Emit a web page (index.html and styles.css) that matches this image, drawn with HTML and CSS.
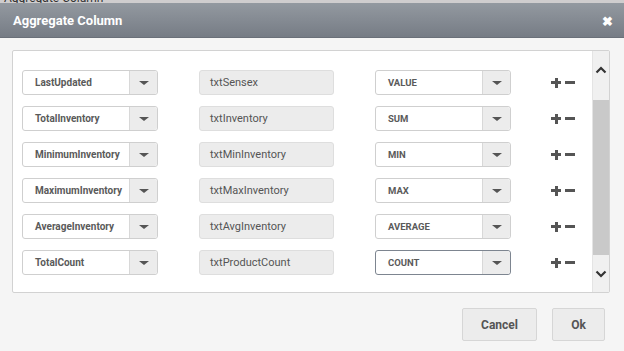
FILE: index.html
```html
<!DOCTYPE html>
<html lang="en">
<head>
    <meta charset="UTF-8">
    <title>Aggregate Column</title>
    <link rel="stylesheet" href="styles.css">
</head>
<body>
    <div class="top-strip"><span>Aggregate Column</span></div>
    <div class="dialog">
        <div class="header">
            <span class="title">Aggregate Column</span>
            <span class="close">&#10006;</span>
        </div>
        <div class="content">
            <div class="panel">
                <div class="rows">
                    <div class="row">
                        <div class="select field"><span class="label">LastUpdated</span><span class="caret"></span></div>
                        <div class="text-input">txtSensex</div>
                        <div class="select agg"><span class="label">VALUE</span><span class="caret"></span></div>
                        <div class="actions"><span class="plus"></span><span class="minus"></span></div>
                    </div>
                    <div class="row">
                        <div class="select field"><span class="label">TotalInventory</span><span class="caret"></span></div>
                        <div class="text-input">txtInventory</div>
                        <div class="select agg"><span class="label">SUM</span><span class="caret"></span></div>
                        <div class="actions"><span class="plus"></span><span class="minus"></span></div>
                    </div>
                    <div class="row">
                        <div class="select field"><span class="label">MinimumInventory</span><span class="caret"></span></div>
                        <div class="text-input">txtMinInventory</div>
                        <div class="select agg"><span class="label">MIN</span><span class="caret"></span></div>
                        <div class="actions"><span class="plus"></span><span class="minus"></span></div>
                    </div>
                    <div class="row">
                        <div class="select field"><span class="label">MaximumInventory</span><span class="caret"></span></div>
                        <div class="text-input">txtMaxInventory</div>
                        <div class="select agg"><span class="label">MAX</span><span class="caret"></span></div>
                        <div class="actions"><span class="plus"></span><span class="minus"></span></div>
                    </div>
                    <div class="row">
                        <div class="select field"><span class="label">AverageInventory</span><span class="caret"></span></div>
                        <div class="text-input">txtAvgInventory</div>
                        <div class="select agg"><span class="label">AVERAGE</span><span class="caret"></span></div>
                        <div class="actions"><span class="plus"></span><span class="minus"></span></div>
                    </div>
                    <div class="row">
                        <div class="select field"><span class="label">TotalCount</span><span class="caret"></span></div>
                        <div class="text-input">txtProductCount</div>
                        <div class="select agg focused"><span class="label">COUNT</span><span class="caret"></span></div>
                        <div class="actions"><span class="plus"></span><span class="minus"></span></div>
                    </div>
                </div>
                <div class="scrollbar">
                    <div class="arrow">
                        <svg width="12" height="8" viewBox="0 0 12 8"><path d="M1.5 6.5 L6 2 L10.5 6.5" fill="none" stroke="#333" stroke-width="2.2"/></svg>
                    </div>
                    <div class="track"><div class="thumb"></div></div>
                    <div class="arrow">
                        <svg width="12" height="8" viewBox="0 0 12 8"><path d="M1.5 1.5 L6 6 L10.5 1.5" fill="none" stroke="#333" stroke-width="2.2"/></svg>
                    </div>
                </div>
            </div>
            <div class="footer">
                <button class="btn cancel">Cancel</button>
                <button class="btn ok">Ok</button>
            </div>
        </div>
    </div>
</body>
</html>
```

FILE: styles.css
```css
body {
    margin: 0;
    font-family: Roboto, "Liberation Sans", Arial, sans-serif;
    background-color: #f5f5f5;
    color: #555;
}
.top-strip {
    height: 3px;
    overflow: hidden;
    background-color: #cfcdce;
    font-size: 12px;
    line-height: 12px;
    color: #333;
    padding-left: 4px;
}
.top-strip span {
    display: block;
    margin-top: -8px;
}
.header {
    height: 34px;
    display: flex;
    align-items: center;
    justify-content: space-between;
    padding: 0 13px;
    background: linear-gradient(#9399a0, #767c85);
    border-bottom: 1px solid #6a7079;
}
.title {
    color: #fff;
    font-size: 13px;
    font-weight: bold;
    margin-top: 1px;
}
.close {
    color: #fff;
    font-size: 13px;
    font-weight: bold;
    margin-right: -2px;
    margin-top: 2px;
}
.content {
    padding: 12px 14px 0 12px;
}
.panel {
    display: flex;
    height: 241px;
    background-color: #fff;
    border: 1px solid #d2d2d2;
    border-radius: 2px;
}
.rows {
    flex: 1;
    padding: 19px 0 0 9px;
}
.row {
    display: flex;
    align-items: center;
    height: 25px;
    margin-bottom: 11px;
}
.select {
    display: flex;
    height: 23px;
    border: 1px solid #cfcfcf;
    border-radius: 3px;
    background-color: #fff;
    box-sizing: content-box;
}
.select.field {
    width: 134px;
}
.select.agg {
    width: 134px;
    margin-left: 41px;
}
.select.focused {
    border-color: #7d8590;
}
.select .label {
    flex: 1;
    padding-left: 12px;
    font-size: 10px;
    font-weight: bold;
    line-height: 23px;
    color: #5a5a5a;
    white-space: nowrap;
}
.select.agg .label {
    font-size: 9.5px;
    padding-left: 12px;
}
.caret {
    width: 27px;
    border-left: 1px solid #d8d8d8;
    background-color: #ececec;
    border-radius: 0 3px 3px 0;
    position: relative;
}
.caret::after {
    content: "";
    position: absolute;
    left: 9px;
    top: 10px;
    border-left: 5px solid transparent;
    border-right: 5px solid transparent;
    border-top: 4px solid #555;
}
.text-input {
    width: 123px;
    height: 23px;
    margin-left: 41px;
    padding-left: 10px;
    border: 1px solid #dedede;
    border-radius: 3px;
    background-color: #ececec;
    font-size: 11px;
    line-height: 23px;
    color: #555;
    box-sizing: content-box;
}
.actions {
    display: flex;
    align-items: center;
    margin-left: 40px;
    gap: 4px;
}
.plus {
    width: 10px;
    height: 10px;
    background:
        linear-gradient(#555, #555) center / 10px 3px no-repeat,
        linear-gradient(#555, #555) center / 3px 10px no-repeat;
}
.minus {
    width: 10px;
    height: 3px;
    background-color: #555;
}
.scrollbar {
    width: 16px;
    display: flex;
    flex-direction: column;
    background-color: #f0f0f0;
    border-left: 1px solid #e4e4e4;
}
.arrow {
    height: 40px;
    display: flex;
    align-items: center;
    justify-content: center;
}
.track {
    flex: 1;
}
.thumb {
    height: 155px;
    margin-top: 12px;
    background-color: #c9c9c9;
}
.footer {
    display: flex;
    justify-content: flex-end;
    gap: 15px;
    margin-top: 15px;
    padding-right: 5px;
}
.btn {
    height: 33px;
    border: 1px solid #d6d6d6;
    border-radius: 2px;
    background-color: #ececec;
    font-family: Roboto, "Liberation Sans", Arial, sans-serif;
    font-size: 12px;
    font-weight: bold;
    color: #555;
    cursor: pointer;
}
.cancel {
    width: 75px;
}
.ok {
    width: 53px;
}
```
